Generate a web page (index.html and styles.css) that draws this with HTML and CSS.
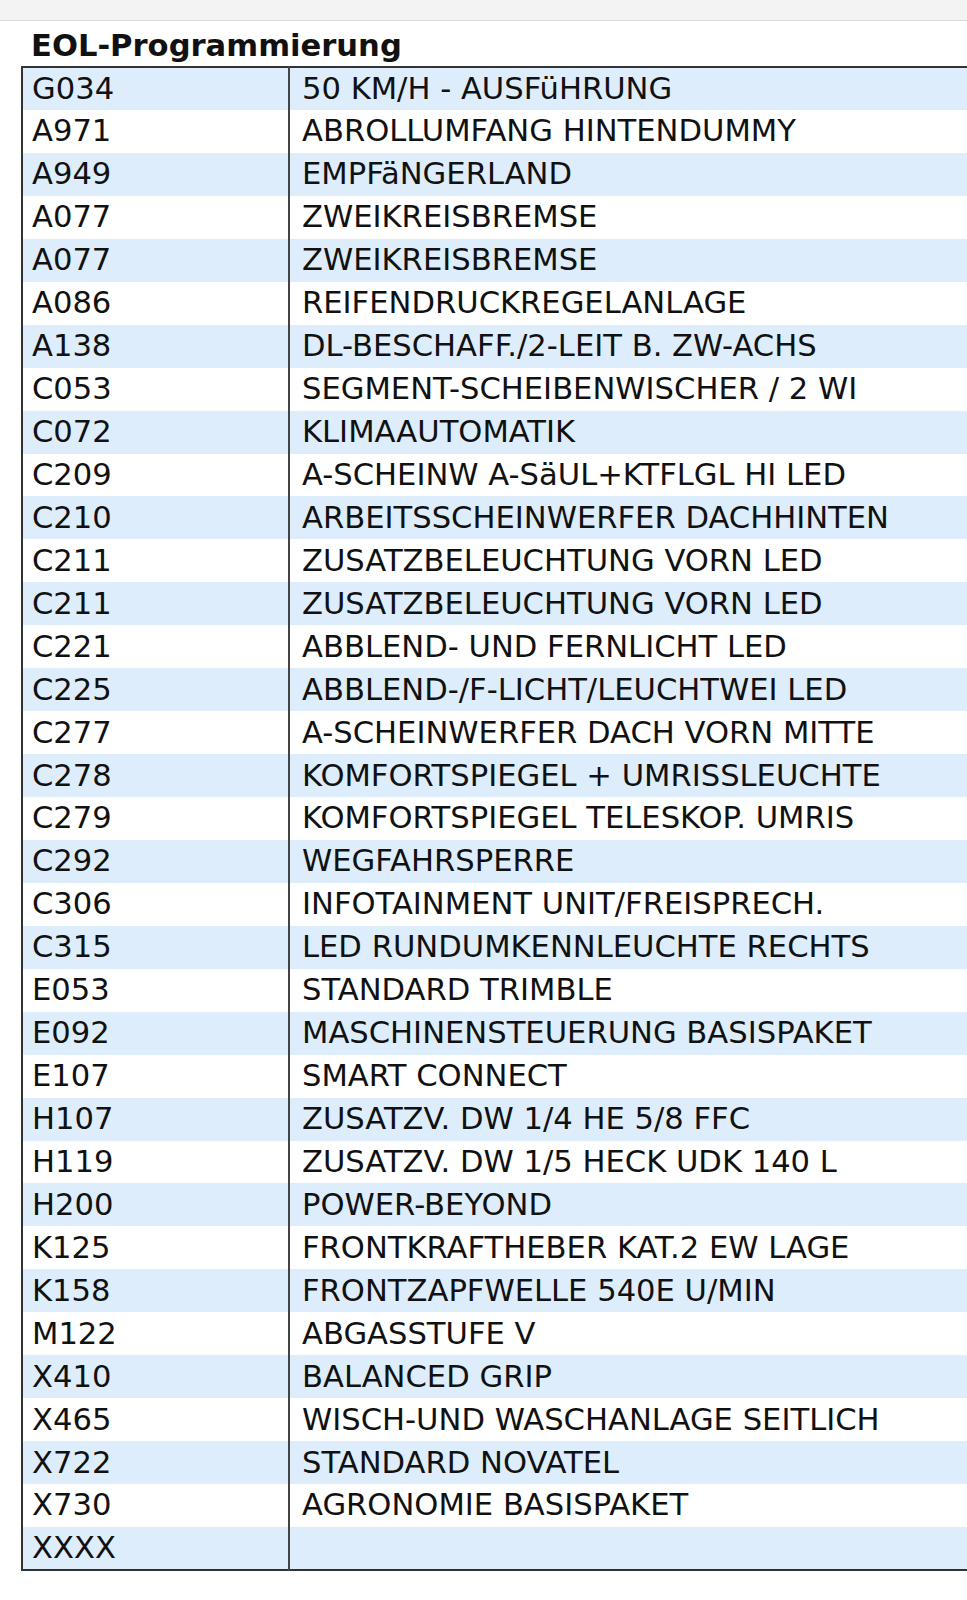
FILE: index.html
```html
<!DOCTYPE html>
<html lang="de">
<head>
<meta charset="utf-8">
<title>EOL-Programmierung</title>
<link rel="stylesheet" href="styles.css">
</head>
<body>
<div class="topbar"></div>
<main class="page">
  <h1 class="title">EOL-Programmierung</h1>
  <div class="table-wrap">
    <table class="eol">
      <tbody>
        <tr><td class="code">G034</td><td class="desc">50 KM/H - AUSFüHRUNG</td></tr>
        <tr><td class="code">A971</td><td class="desc">ABROLLUMFANG HINTENDUMMY</td></tr>
        <tr><td class="code">A949</td><td class="desc">EMPFäNGERLAND</td></tr>
        <tr><td class="code">A077</td><td class="desc">ZWEIKREISBREMSE</td></tr>
        <tr><td class="code">A077</td><td class="desc">ZWEIKREISBREMSE</td></tr>
        <tr><td class="code">A086</td><td class="desc">REIFENDRUCKREGELANLAGE</td></tr>
        <tr><td class="code">A138</td><td class="desc">DL-BESCHAFF./2-LEIT B. ZW-ACHS</td></tr>
        <tr><td class="code">C053</td><td class="desc">SEGMENT-SCHEIBENWISCHER / 2 WI</td></tr>
        <tr><td class="code">C072</td><td class="desc">KLIMAAUTOMATIK</td></tr>
        <tr><td class="code">C209</td><td class="desc">A-SCHEINW A-SäUL+KTFLGL HI LED</td></tr>
        <tr><td class="code">C210</td><td class="desc">ARBEITSSCHEINWERFER DACHHINTEN</td></tr>
        <tr><td class="code">C211</td><td class="desc">ZUSATZBELEUCHTUNG VORN LED</td></tr>
        <tr><td class="code">C211</td><td class="desc">ZUSATZBELEUCHTUNG VORN LED</td></tr>
        <tr><td class="code">C221</td><td class="desc">ABBLEND- UND FERNLICHT LED</td></tr>
        <tr><td class="code">C225</td><td class="desc">ABBLEND-/F-LICHT/LEUCHTWEI LED</td></tr>
        <tr><td class="code">C277</td><td class="desc">A-SCHEINWERFER DACH VORN MITTE</td></tr>
        <tr><td class="code">C278</td><td class="desc">KOMFORTSPIEGEL + UMRISSLEUCHTE</td></tr>
        <tr><td class="code">C279</td><td class="desc">KOMFORTSPIEGEL TELESKOP. UMRIS</td></tr>
        <tr><td class="code">C292</td><td class="desc">WEGFAHRSPERRE</td></tr>
        <tr><td class="code">C306</td><td class="desc">INFOTAINMENT UNIT/FREISPRECH.</td></tr>
        <tr><td class="code">C315</td><td class="desc">LED RUNDUMKENNLEUCHTE RECHTS</td></tr>
        <tr><td class="code">E053</td><td class="desc">STANDARD TRIMBLE</td></tr>
        <tr><td class="code">E092</td><td class="desc">MASCHINENSTEUERUNG BASISPAKET</td></tr>
        <tr><td class="code">E107</td><td class="desc">SMART CONNECT</td></tr>
        <tr><td class="code">H107</td><td class="desc">ZUSATZV. DW 1/4 HE 5/8 FFC</td></tr>
        <tr><td class="code">H119</td><td class="desc">ZUSATZV. DW 1/5 HECK UDK 140 L</td></tr>
        <tr><td class="code">H200</td><td class="desc">POWER-BEYOND</td></tr>
        <tr><td class="code">K125</td><td class="desc">FRONTKRAFTHEBER KAT.2 EW LAGE</td></tr>
        <tr><td class="code">K158</td><td class="desc">FRONTZAPFWELLE 540E U/MIN</td></tr>
        <tr><td class="code">M122</td><td class="desc">ABGASSTUFE V</td></tr>
        <tr><td class="code">X410</td><td class="desc">BALANCED GRIP</td></tr>
        <tr><td class="code">X465</td><td class="desc">WISCH-UND WASCHANLAGE SEITLICH</td></tr>
        <tr><td class="code">X722</td><td class="desc">STANDARD NOVATEL</td></tr>
        <tr><td class="code">X730</td><td class="desc">AGRONOMIE BASISPAKET</td></tr>
        <tr><td class="code">XXXX</td><td class="desc"></td></tr>
      </tbody>
    </table>
  </div>
</main>
</body>
</html>
```
FILE: styles.css
```css
html, body {
  margin: 0;
  padding: 0;
  background: #ffffff;
}
body {
  font-family: "DejaVu Sans", "Noto Sans", sans-serif;
  color: #111111;
  overflow-x: hidden;
}
.topbar {
  height: 20px;
  background: #f3f3f3;
  border-bottom: 1px solid #dcdcdc;
}
.page {
  padding: 0 0 0 21px;
}
.title {
  margin: 0;
  padding: 5px 0 0 10px;
  font-size: 30.6px;
  font-weight: bold;
  line-height: 40px;
  height: 40px;
  color: #111111;
}
.table-wrap {
  overflow: hidden;
}
.eol {
  width: 980px;
  border-collapse: collapse;
  border: 2px solid #333333;
  font-size: 30.6px;
}
.eol td {
  height: 42.94px;
  padding: 0 9px;
  box-sizing: border-box;
  line-height: 42px;
  white-space: nowrap;
}
.eol tr:nth-child(odd) td {
  background: #ddedfb;
}
.eol .code {
  width: 267px;
  border-right: 2px solid #444444;
}
.eol .desc {
  padding-left: 12px;
}
```
